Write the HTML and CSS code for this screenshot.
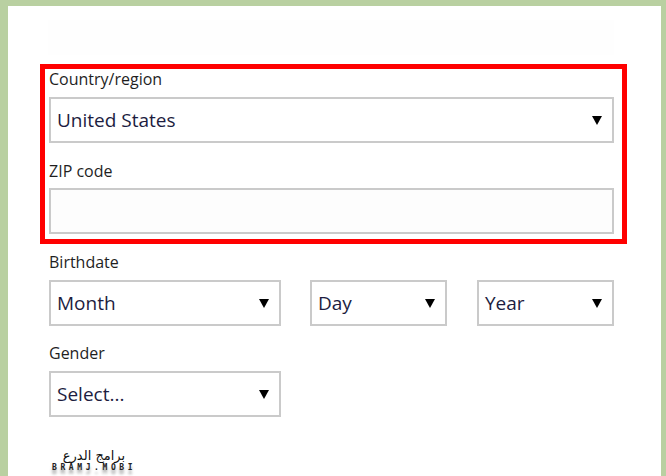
FILE: index.html
```html
<!DOCTYPE html>
<html lang="en">
<head>
<meta charset="utf-8">
<title>Sign up</title>
<link rel="stylesheet" href="styles.css">
</head>
<body>
<div class="frame">
  <div class="panel">
    <div class="faint"></div>
    <div class="highlight">
      <div class="label">Country/region</div>
      <div class="field wide">
        <span class="value">United States</span>
        <svg class="arrow" width="10" height="9" viewBox="0 0 10 9"><polygon points="0,0 10,0 5,9" fill="#000"/></svg>
      </div>
      <div class="label gap">ZIP code</div>
      <div class="field wide input"></div>
    </div>
    <div class="rest">
      <div class="label">Birthdate</div>
      <div class="date-row">
        <div class="field month">
          <span class="value">Month</span>
          <svg class="arrow" width="10" height="9" viewBox="0 0 10 9"><polygon points="0,0 10,0 5,9" fill="#000"/></svg>
        </div>
        <div class="field day">
          <span class="value">Day</span>
          <svg class="arrow" width="10" height="9" viewBox="0 0 10 9"><polygon points="0,0 10,0 5,9" fill="#000"/></svg>
        </div>
        <div class="field year">
          <span class="value">Year</span>
          <svg class="arrow" width="10" height="9" viewBox="0 0 10 9"><polygon points="0,0 10,0 5,9" fill="#000"/></svg>
        </div>
      </div>
      <div class="label gap2">Gender</div>
      <div class="field month">
        <span class="value">Select...</span>
        <svg class="arrow" width="10" height="9" viewBox="0 0 10 9"><polygon points="0,0 10,0 5,9" fill="#000"/></svg>
      </div>
      <div class="watermark">
        <div class="wm-ar" dir="rtl">برامج الدرع</div>
        <div class="wm-en">BRAMJ.MOBI</div>
      </div>
    </div>
  </div>
</div>
</body>
</html>
```

FILE: styles.css
```css
html, body {
  margin: 0;
  padding: 0;
}

body {
  background: #b9d0a1;
  font-family: "Open Sans", "Noto Sans", sans-serif;
  overflow: hidden;
}

.frame {
  width: 666px;
  height: 476px;
  box-sizing: border-box;
  padding: 6px 5px 0 8px;
}

.panel {
  background: #ffffff;
  height: 470px;
  box-sizing: border-box;
  padding: 14px 34px 0 32px;
}

.faint {
  margin-left: 8px;
  width: 566px;
  height: 35px;
  background: #fefefe;
}

.highlight {
  margin-top: 9px;
  border: 5px solid #ff0000;
  padding: 0 8px 5px 4px;
}

.label {
  font-size: 16px;
  line-height: 20px;
  color: #1f1f1f;
  margin-bottom: 8px;
}

.label.gap {
  margin-top: 18px;
  margin-bottom: 7px;
}

.field {
  height: 46px;
  box-sizing: border-box;
  border: 2px solid #cacaca;
  background: #ffffff;
  display: flex;
  align-items: center;
  justify-content: space-between;
  padding: 0 10px 0 6px;
}

.field.input {
  background: #fdfdfd;
}

.value {
  font-size: 19px;
  color: #1d1d3f;
  line-height: 24px;
}

.arrow {
  display: block;
  flex: none;
}

.rest {
  padding-left: 9px;
  padding-top: 8px;
}

.date-row {
  display: flex;
}

.month {
  width: 232px;
}

.day {
  width: 137px;
  margin-left: 29px;
}

.year {
  width: 137px;
  margin-left: 30px;
}

.label.gap2 {
  margin-top: 17px;
}

.watermark {
  margin-top: 31px;
  margin-left: 3px;
  width: 84px;
  text-align: center;
}

.wm-ar {
  font-family: "DejaVu Sans", sans-serif;
  font-size: 13px;
  line-height: 15px;
  color: #111111;
}

.wm-en {
  font-family: "DejaVu Sans Mono", monospace;
  font-size: 8px;
  line-height: 10px;
  font-weight: bold;
  letter-spacing: 3.6px;
  color: #222222;
  text-shadow: 0 4px 3px #9a9a9a;
}
```
